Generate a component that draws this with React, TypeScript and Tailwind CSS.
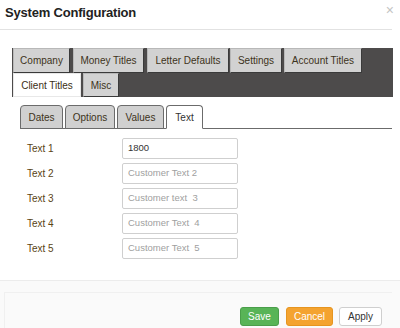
import React from "react";

const font = { fontFamily: '"Liberation Sans", Arial, sans-serif' };

function TopTab({ label, active, w }: { label: string; active?: boolean; w: string }) {
  return (
    <div
      className={`${w} h-full flex items-center justify-center border text-[10px] ${
        active
          ? "bg-white border-[#e8e8e8] text-[#3a2e14]"
          : "bg-[#d2d2d2] border-[#b8b8b8] border-r-[#3a3a3a] border-b-[#3a3a3a] text-[#3d3320]"
      }`}
    >
      {label}
    </div>
  );
}

function SubTab({ label, active, w }: { label: string; active?: boolean; w: string }) {
  return (
    <div
      className={`${w} h-[24px] flex items-center justify-center rounded-t-[4px] border border-[#6b6b6b] text-[10px] ${
        active ? "bg-white border-b-white text-[#333]" : "bg-[#d0d0d0] text-[#3d3320]"
      }`}
    >
      {label}
    </div>
  );
}

function Row({ label, value, placeholder }: { label: string; value?: string; placeholder?: string }) {
  return (
    <div className="flex h-[25px] items-start">
      <div className="w-[95px] pt-[3px] text-[10px] text-[#5a4415]">{label}</div>
      <div className="w-[116px] h-[21px] border border-[#cfcfcf] rounded-[2px] bg-white flex items-center pl-[5px] text-[9.5px] whitespace-pre">
        {value ? (
          <span className="text-[#333]">{value}</span>
        ) : (
          <span className="text-[#a0a0a0]">{placeholder}</span>
        )}
      </div>
    </div>
  );
}

export default function App() {
  return (
    <div className="w-[400px] h-[328px] bg-white relative overflow-hidden" style={font}>
      {/* header */}
      <div className="h-[30px] border-b border-[#e2e2e2] mr-[8px] flex items-start pl-[5px] pt-[3px]">
        <div className="text-[13px] font-bold text-[#222] tracking-[-0.2px]">System Configuration</div>
      </div>
      <div className="absolute right-[6px] top-[3px] text-[14px] leading-none text-[#c4c4c4]">×</div>

      {/* main tabs */}
      <div className="ml-[12px] mt-[18px] w-[381px] h-[49px] bg-[#4d4b4b] flex flex-col pl-[1px]">
        <div className="flex h-[25px] gap-[3px]">
          <TopTab label="Company" w="w-[57px]" />
          <TopTab label="Money Titles" w="w-[71px]" />
          <TopTab label="Letter Defaults" w="w-[82px]" />
          <div className="-ml-[2px] flex h-full gap-[2px]">
            <TopTab label="Settings" w="w-[52px]" />
            <TopTab label="Account Titles" w="w-[78px]" />
          </div>
        </div>
        <div className="flex h-[24px] gap-[2px]">
          <TopTab label="Client Titles" active w="w-[68px]" />
          <TopTab label="Misc" w="w-[36px]" />
        </div>
      </div>

      {/* sub tabs */}
      <div className="ml-[20px] mt-[8px] w-[372px] flex gap-[2px] border-b border-[#6b6b6b] h-[24px]">
        <SubTab label="Dates" w="w-[43px]" />
        <SubTab label="Options" w="w-[50px]" />
        <SubTab label="Values" w="w-[47px]" />
        <SubTab label="Text" active w="w-[37px]" />
      </div>

      {/* form */}
      <div className="ml-[27px] mt-[9px] flex flex-col">
        <Row label="Text 1" value="1800" />
        <Row label="Text 2" placeholder="Customer Text 2" />
        <Row label="Text 3" placeholder="Customer text  3" />
        <Row label="Text 4" placeholder="Customer Text  4" />
        <Row label="Text 5" placeholder="Customer Text  5" />
      </div>

      {/* footer */}
      <div className="absolute left-0 right-0 top-[280px] bottom-0 bg-[#fafafa] border-t border-[#ececec]">
        <div className="ml-[4px] mr-[8px] mt-[11px] h-full border-l border-t border-[#f0f0f0] flex justify-end items-start pt-[14px] pr-[10px] gap-[6px]">
          <div className="w-[39px] h-[19px] rounded-[3px] bg-[#58b457] border border-[#4a9e4a] text-white text-[10px] flex items-center justify-center">
            Save
          </div>
          <div className="ml-[1px] w-[47px] h-[19px] rounded-[3px] bg-[#f4a330] border border-[#e69520] text-white text-[10px] flex items-center justify-center">
            Cancel
          </div>
          <div className="w-[43px] h-[19px] rounded-[3px] bg-white border border-[#cfcfcf] text-[#333] text-[10px] flex items-center justify-center">
            Apply
          </div>
        </div>
      </div>
    </div>
  );
}
